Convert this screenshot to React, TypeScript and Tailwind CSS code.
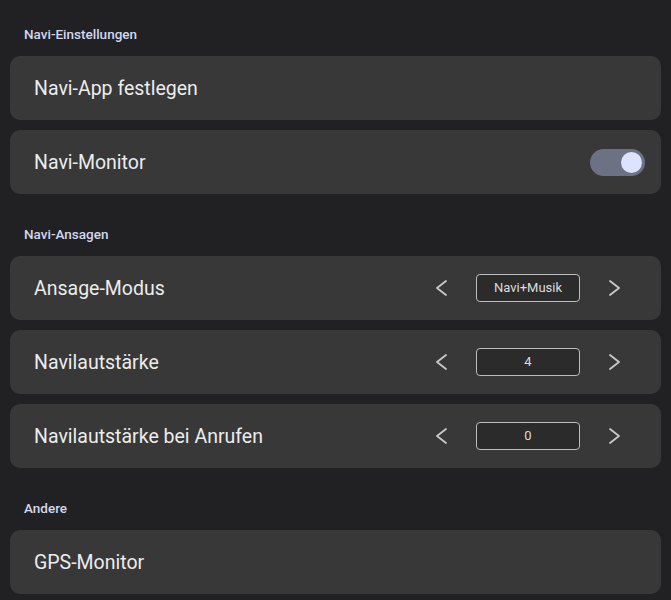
import React from "react";

function Chevron({ dir }: { dir: "left" | "right" }) {
  return (
    <svg width="14" height="18" viewBox="0 0 14 18" className="shrink-0">
      <polyline
        points={dir === "left" ? "12,2 3,9 12,16" : "2,2 11,9 2,16"}
        fill="none"
        stroke="#c8c8c8"
        strokeWidth="1.8"
        strokeLinecap="round"
        strokeLinejoin="round"
      />
    </svg>
  );
}

function SectionHeader({ title }: { title: string }) {
  return (
    <div className="ml-[14px] h-5 flex items-center text-[13.5px] font-medium text-[#d3d7f0] mb-3">
      {title}
    </div>
  );
}

function Card({ children }: { children: React.ReactNode }) {
  return (
    <div className="h-[64px] rounded-[10px] bg-[#383838] flex items-center pl-6">
      {children}
    </div>
  );
}

function Label({ text }: { text: string }) {
  return <div className="flex-1 pt-[2px] text-[19.5px] text-[#ececec]">{text}</div>;
}

function Stepper({ label, value }: { label: string; value: string }) {
  return (
    <Card>
      <Label text={label} />
      <div className="flex items-center gap-[28px] pr-[39px]">
        <Chevron dir="left" />
        <div className="w-[104px] h-[28px] rounded-[4px] border-[1.5px] border-[#bdbdbd] bg-[#2b2b2b] flex items-center justify-center text-[13px] text-[#dcdcdc]">
          {value}
        </div>
        <Chevron dir="right" />
      </div>
    </Card>
  );
}

export default function App() {
  return (
    <div
      className="w-[671px] h-[600px] overflow-hidden bg-[#212123] px-[10px] pt-6"
      style={{ fontFamily: "Roboto, 'Noto Sans', sans-serif" }}
    >
      <SectionHeader title="Navi-Einstellungen" />
      <div className="flex flex-col gap-[10px]">
        <Card>
          <Label text="Navi-App festlegen" />
        </Card>
        <Card>
          <Label text="Navi-Monitor" />
          <div className="mr-4 w-[55px] h-[27px] rounded-full bg-[#6c7183] flex items-center justify-end pr-[3px]">
            <div className="w-[21px] h-[21px] rounded-full bg-[#dde2ff]" />
          </div>
        </Card>
      </div>
      <div className="h-[30px]" />
      <SectionHeader title="Navi-Ansagen" />
      <div className="flex flex-col gap-[10px]">
        <Stepper label="Ansage-Modus" value="Navi+Musik" />
        <Stepper label="Navilautstärke" value="4" />
        <Stepper label="Navilautstärke bei Anrufen" value="0" />
      </div>
      <div className="h-[30px]" />
      <SectionHeader title="Andere" />
      <div className="flex flex-col gap-[10px]">
        <Card>
          <Label text="GPS-Monitor" />
        </Card>
      </div>
    </div>
  );
}
